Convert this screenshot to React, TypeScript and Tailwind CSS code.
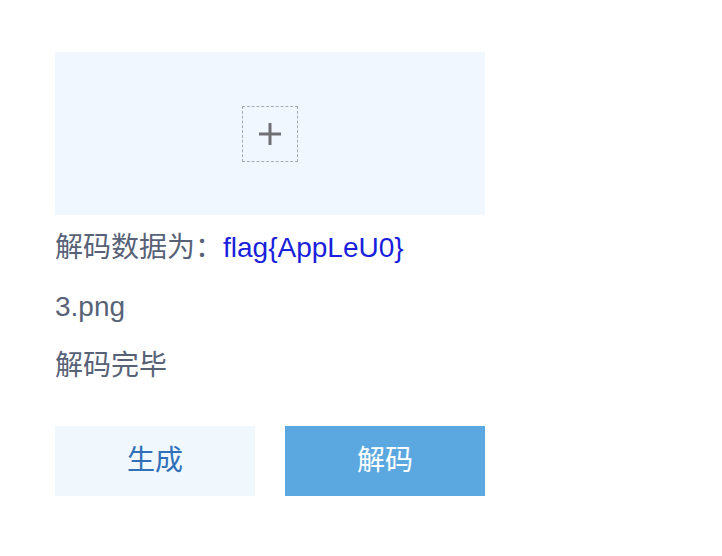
const font = { fontFamily: '"Liberation Sans", "Noto Sans CJK SC", sans-serif' };

export default function App() {
  return (
    <div className="min-h-screen bg-white pl-[55px] pt-[52px]" style={font}>
      {/* image picker */}
      <div className="flex h-[163px] w-[430px] items-center justify-center bg-[#f0f7fe]">
        <div className="flex h-[56px] w-[56px] items-center justify-center border border-dashed border-[#a9abb1]">
          <svg width="24" height="24" viewBox="0 0 24 24">
            <path d="M12 1v22M1 12h22" stroke="#707074" strokeWidth="3" />
          </svg>
        </div>
      </div>

      <div className="mt-[3px] flex flex-col text-[28px] text-[#586277]">
        <div className="flex h-[59px] items-center">
          <span>解码数据为：</span>
          <span className="text-[#1a1fdc]">flag{"{"}AppLeU0{"}"}</span>
        </div>
        <div className="flex h-[59px] items-center">3.png</div>
        <div className="flex h-[59px] items-center">解码完毕</div>
      </div>

      <div className="mt-[31px] flex gap-[30px]">
        <button className="h-[70px] w-[200px] bg-[#f0f7fd] text-[28px] text-[#2f70b8]">生成</button>
        <button className="h-[70px] w-[200px] bg-[#5ba8e0] text-[28px] text-white">解码</button>
      </div>
    </div>
  );
}
